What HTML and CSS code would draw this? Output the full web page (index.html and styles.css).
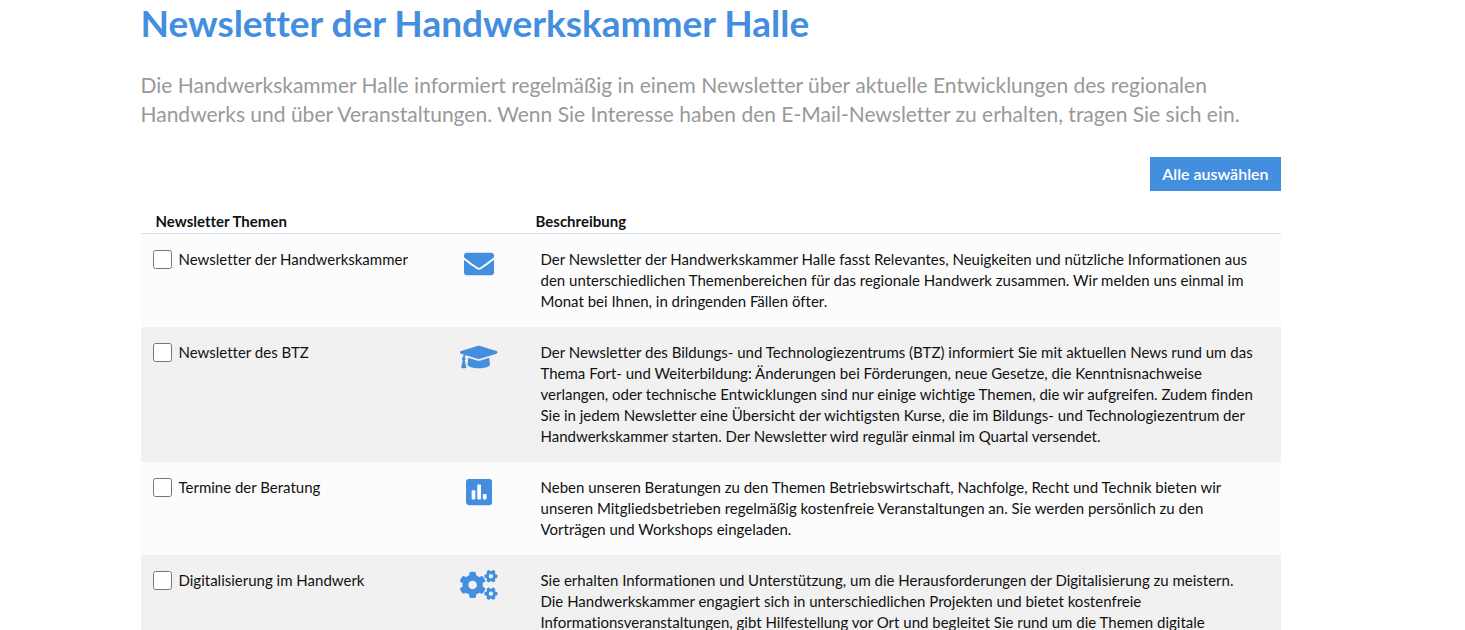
FILE: index.html
```
<!DOCTYPE html>
<html lang="de">
<head>
    <meta charset="UTF-8">
    <meta name="viewport" content="width=device-width, initial-scale=1.0">
    <title>Newsletter der Handwerkskammer Halle</title>
    <link rel="stylesheet" href="styles.css">
</head>
<body>
    <main class="container">
        <h1>Newsletter der Handwerkskammer Halle</h1>
        <p class="lead">Die Handwerkskammer Halle informiert regelmäßig in einem Newsletter über aktuelle Entwicklungen des regionalen<br>
            Handwerks und über Veranstaltungen. Wenn Sie Interesse haben den E-Mail-Newsletter zu erhalten, tragen Sie sich ein.</p>

        <div class="actions">
            <button type="button" class="btn">Alle auswählen</button>
        </div>

        <table class="topics">
            <colgroup>
                <col class="col-topic">
                <col class="col-icon">
                <col>
            </colgroup>
            <thead>
                <tr>
                    <th colspan="2">Newsletter Themen</th>
                    <th>Beschreibung</th>
                </tr>
            </thead>
            <tbody>
                <tr>
                    <td>
                        <div class="check">
                            <input type="checkbox" id="nl-hwk">
                            <label for="nl-hwk">Newsletter der Handwerkskammer</label>
                        </div>
                    </td>
                    <td class="icon">
                        <svg viewBox="0 0 512 512" aria-hidden="true"><path d="M502.3 190.8c3.9-3.1 9.7-.2 9.7 4.7V400c0 26.5-21.5 48-48 48H48c-26.5 0-48-21.5-48-48V195.6c0-5 5.7-7.8 9.7-4.7 22.4 17.4 52.1 39.5 154.1 113.6 21.1 15.4 56.7 47.8 92.2 47.6 35.7.3 72-32.8 92.3-47.6 102-74.1 131.6-96.3 154-113.7zM256 320c23.2.4 56.6-29.2 73.4-41.4 132.7-96.3 142.8-104.7 173.4-128.7 5.8-4.5 9.2-11.5 9.2-18.9v-19c0-26.5-21.5-48-48-48H48c-26.5 0-48 21.5-48 48v19c0 7.4 3.4 14.3 9.2 18.9 30.6 23.9 40.7 32.4 173.4 128.7 16.8 12.2 50.2 41.8 73.4 41.4z"/></svg>
                    </td>
                    <td class="text">Der Newsletter der Handwerkskammer Halle fasst Relevantes, Neuigkeiten und nützliche Informationen aus<br>
                        den unterschiedlichen Themenbereichen für das regionale Handwerk zusammen. Wir melden uns einmal im<br>
                        Monat bei Ihnen, in dringenden Fällen öfter.</td>
                </tr>
                <tr>
                    <td>
                        <div class="check">
                            <input type="checkbox" id="nl-btz">
                            <label for="nl-btz">Newsletter des BTZ</label>
                        </div>
                    </td>
                    <td class="icon">
                        <svg viewBox="0 0 640 512" aria-hidden="true"><path d="M622.34 153.2L343.4 67.5c-15.2-4.67-31.6-4.67-46.79 0L17.66 153.2c-23.54 7.23-23.54 38.36 0 45.59l48.63 14.94c-10.67 13.19-17.23 29.28-17.88 46.9C38.78 266.15 32 276.11 32 288c0 10.78 5.68 19.85 13.86 25.65L20.33 428.53C18.11 438.52 25.71 448 35.94 448h56.11c10.24 0 17.84-9.48 15.62-19.47L82.14 313.65C90.32 307.85 96 298.78 96 288c0-11.57-6.47-21.25-15.66-26.87.76-15.02 8.44-28.3 20.69-36.72L296.6 284.5c9.06 2.78 26.44 6.25 46.79 0l278.95-85.7c23.55-7.24 23.55-38.36 0-45.6zM352.79 315.09c-28.53 8.76-52.84 3.92-65.59 0l-145.02-44.55L128 384c0 35.35 85.96 64 192 64s192-28.65 192-64l-14.18-113.47-145.03 44.56z"/></svg>
                    </td>
                    <td class="text">Der Newsletter des Bildungs- und Technologiezentrums (BTZ) informiert Sie mit aktuellen News rund um das<br>
                        Thema Fort- und Weiterbildung: Änderungen bei Förderungen, neue Gesetze, die Kenntnisnachweise<br>
                        verlangen, oder technische Entwicklungen sind nur einige wichtige Themen, die wir aufgreifen. Zudem finden<br>
                        Sie in jedem Newsletter eine Übersicht der wichtigsten Kurse, die im Bildungs- und Technologiezentrum der<br>
                        Handwerkskammer starten. Der Newsletter wird regulär einmal im Quartal versendet.</td>
                </tr>
                <tr>
                    <td>
                        <div class="check">
                            <input type="checkbox" id="nl-beratung">
                            <label for="nl-beratung">Termine der Beratung</label>
                        </div>
                    </td>
                    <td class="icon">
                        <svg viewBox="0 0 448 512" aria-hidden="true"><path d="M400 32H48C21.5 32 0 53.5 0 80v352c0 26.5 21.5 48 48 48h352c26.5 0 48-21.5 48-48V80c0-26.5-21.5-48-48-48zM160 368c0 8.84-7.16 16-16 16h-32c-8.84 0-16-7.16-16-16V240c0-8.84 7.16-16 16-16h32c8.84 0 16 7.16 16 16v128zm96 0c0 8.84-7.16 16-16 16h-32c-8.84 0-16-7.16-16-16V144c0-8.84 7.16-16 16-16h32c8.84 0 16 7.16 16 16v224zm96 0c0 8.84-7.16 16-16 16h-32c-8.84 0-16-7.16-16-16v-64c0-8.84 7.16-16 16-16h32c8.84 0 16 7.16 16 16v64z"/></svg>
                    </td>
                    <td class="text">Neben unseren Beratungen zu den Themen Betriebswirtschaft, Nachfolge, Recht und Technik bieten wir<br>
                        unseren Mitgliedsbetrieben regelmäßig kostenfreie Veranstaltungen an. Sie werden persönlich zu den<br>
                        Vorträgen und Workshops eingeladen.</td>
                </tr>
                <tr>
                    <td>
                        <div class="check">
                            <input type="checkbox" id="nl-digital">
                            <label for="nl-digital">Digitalisierung im Handwerk</label>
                        </div>
                    </td>
                    <td class="icon">
                        <svg viewBox="0 0 640 512" aria-hidden="true"><path d="M512.1 191l-8.2 14.3c-3 5.3-9.4 7.5-15.1 5.4-11.8-4.4-22.6-10.7-32.1-18.6-4.6-3.8-5.8-10.5-2.8-15.7l8.2-14.3c-6.9-8-12.3-17.3-15.9-27.4h-16.5c-6 0-11.2-4.3-12.2-10.3-2-12-2.1-24.6 0-37.1 1-6 6.2-10.4 12.2-10.4h16.5c3.6-10.1 9-19.4 15.9-27.4l-8.2-14.3c-3-5.2-1.9-11.9 2.8-15.7 9.5-7.9 20.4-14.2 32.1-18.6 5.7-2.1 12.1.1 15.1 5.4l8.2 14.3c10.5-1.9 21.2-1.9 31.7 0L552 6.3c3-5.3 9.4-7.5 15.1-5.4 11.8 4.4 22.6 10.7 32.1 18.6 4.6 3.8 5.8 10.5 2.8 15.7l-8.2 14.3c6.9 8 12.3 17.3 15.9 27.4h16.5c6 0 11.2 4.3 12.2 10.3 2 12 2.1 24.6 0 37.1-1 6-6.2 10.4-12.2 10.4h-16.5c-3.6 10.1-9 19.4-15.9 27.4l8.2 14.3c3 5.2 1.9 11.9-2.8 15.7-9.5 7.9-20.4 14.2-32.1 18.6-5.7 2.1-12.1-.1-15.1-5.4l-8.2-14.3c-10.4 1.9-21.2 1.9-31.7 0zm-10.5-58.8c38.5 29.6 82.4-14.3 52.8-52.8-38.5-29.7-82.4 14.3-52.8 52.8zM386.3 286.1l33.7 16.8c10.1 5.8 14.5 18.1 10.5 29.1-8.9 24.2-26.4 46.4-42.6 65.8-7.4 8.9-20.2 11.1-30.3 5.3l-29.1-16.8c-16 13.7-34.6 24.6-54.9 31.7v33.6c0 11.6-8.3 21.6-19.7 23.6-24.6 4.2-50.4 4.4-75.9 0-11.5-2-20-11.9-20-23.6V418c-20.3-7.2-38.9-18-54.9-31.7L74 403c-10 5.8-22.9 3.6-30.3-5.3-16.2-19.4-33.3-41.6-42.2-65.7-4-10.9.4-23.2 10.5-29.1l33.3-16.8c-3.9-20.9-3.9-42.4 0-63.4L12 205.8c-10.1-5.8-14.6-18.1-10.5-29 8.9-24.2 26-46.4 42.2-65.8 7.4-8.9 20.2-11.1 30.3-5.3l29.1 16.8c16-13.7 34.6-24.6 54.9-31.7V57.1c0-11.5 8.2-21.5 19.6-23.5 24.6-4.2 50.5-4.4 76-.1 11.5 2 20 11.9 20 23.6v33.6c20.3 7.2 38.9 18 54.9 31.7l29.1-16.8c10-5.8 22.9-3.6 30.3 5.3 16.2 19.4 33.2 41.6 42.1 65.8 4 10.9.1 23.2-10 29.1l-33.7 16.8c3.9 21 3.9 42.5 0 63.5zm-117.6 21.1c59.2-77-28.7-164.9-105.7-105.7-59.2 77 28.7 164.9 105.7 105.7zm243.4 182.7l-8.2 14.3c-3 5.3-9.4 7.5-15.1 5.4-11.8-4.4-22.6-10.7-32.1-18.6-4.6-3.8-5.8-10.5-2.8-15.7l8.2-14.3c-6.9-8-12.3-17.3-15.9-27.4h-16.5c-6 0-11.2-4.3-12.2-10.3-2-12-2.1-24.6 0-37.1 1-6 6.2-10.4 12.2-10.4h16.5c3.6-10.1 9-19.4 15.9-27.4l-8.2-14.3c-3-5.2-1.9-11.9 2.8-15.7 9.5-7.9 20.4-14.2 32.1-18.6 5.7-2.1 12.1.1 15.1 5.4l8.2 14.3c10.5-1.9 21.2-1.9 31.7 0l8.2-14.3c3-5.3 9.4-7.5 15.1-5.4 11.8 4.4 22.6 10.7 32.1 18.6 4.6 3.8 5.8 10.5 2.8 15.7l-8.2 14.3c6.9 8 12.3 17.3 15.9 27.4h16.5c6 0 11.2 4.3 12.2 10.3 2 12 2.1 24.6 0 37.1-1 6-6.2 10.4-12.2 10.4h-16.5c-3.6 10.1-9 19.4-15.9 27.4l8.2 14.3c3 5.2 1.9 11.9-2.8 15.7-9.5 7.9-20.4 14.2-32.1 18.6-5.7 2.1-12.1-.1-15.1-5.4l-8.2-14.3c-10.4 1.9-21.2 1.9-31.7 0zM501.6 431c38.5 29.6 82.4-14.3 52.8-52.8-38.5-29.6-82.4 14.3-52.8 52.8z"/></svg>
                    </td>
                    <td class="text">Sie erhalten Informationen und Unterstützung, um die Herausforderungen der Digitalisierung zu meistern.<br>
                        Die Handwerkskammer engagiert sich in unterschiedlichen Projekten und bietet kostenfreie<br>
                        Informationsveranstaltungen, gibt Hilfestellung vor Ort und begleitet Sie rund um die Themen digitale</td>
                </tr>
            </tbody>
        </table>
    </main>
</body>
</html>
```
FILE: styles.css
```
body {
    margin: 0;
    padding: 0 44px 0 0;
    font-family: Lato, 'Noto Sans', sans-serif;
    font-size: 15px;
    line-height: 21px;
    font-variant-ligatures: none;
    color: #111;
    background: #fff;
}
.container {
    max-width: 1140px;
    margin: 0 auto;
}
h1 {
    margin: 0;
    font-size: 37px;
    line-height: 46px;
    font-weight: bold;
    color: #448ee0;
}
.lead {
    margin: 24px 0 29px;
    font-size: 21px;
    line-height: 29px;
    color: #999;
}
.actions {
    display: flex;
    justify-content: flex-end;
    margin-bottom: 20px;
}
.btn {
    padding: 6px 12px;
    border: none;
    background: #448ee0;
    color: #fff;
    font-family: inherit;
    font-size: 16px;
    line-height: 22px;
    font-weight: 600;
    cursor: pointer;
}
.topics {
    width: 100%;
    table-layout: fixed;
    border-collapse: collapse;
}
.col-topic {
    width: 297px;
}
.col-icon {
    width: 83px;
}
th {
    padding: 0 15px 1px;
    border-bottom: 1px solid #cfe2f5;
    text-align: left;
    font-weight: bold;
}
td {
    padding: 15px 0;
    vertical-align: top;
}
tbody tr {
    background: #fcfcfc;
}
tbody tr:nth-child(even) {
    background: #f1f1f1;
}
.check {
    display: flex;
    align-items: center;
    gap: 7px;
    padding-left: 12px;
}
.check input {
    width: 19px;
    height: 19px;
    margin: 0;
}
.icon {
    text-align: center;
}
.icon svg {
    display: block;
    height: 30px;
    margin: 0 auto;
    fill: #448ee0;
}
.text {
    padding-left: 20px;
    white-space: nowrap;
}
```
